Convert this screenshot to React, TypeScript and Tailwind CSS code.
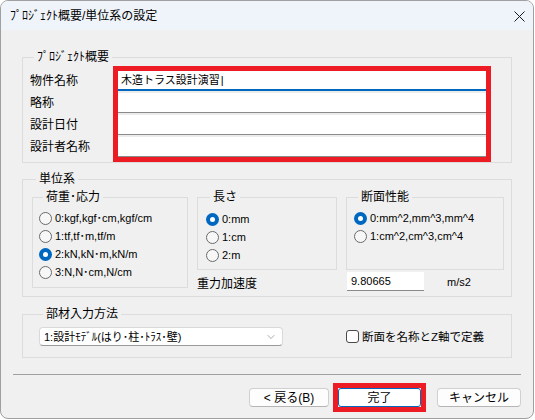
import { ChevronDown } from 'lucide-react';
import type { ReactNode } from 'react';

function Group({ title, className, children }: { title: string; className: string; children: ReactNode }) {
  return (
    <fieldset className={`border border-[#dcdcdc] ${className}`}>
      <legend className="ml-[4px] px-[3px] text-[12px] leading-[14px]">{title}</legend>
      {children}
    </fieldset>
  );
}

function Radio({ checked, label }: { checked?: boolean; label: string }) {
  return (
    <div className="flex h-[18px] items-center">
      {checked ? (
        <span className="flex h-[13px] w-[13px] shrink-0 items-center justify-center rounded-full bg-[#0067c0]">
          <span className="h-[5px] w-[5px] rounded-full bg-white" />
        </span>
      ) : (
        <span className="h-[13px] w-[13px] shrink-0 rounded-full border border-[#6a6a6a] bg-[#f7f7f7]" />
      )}
      <span className="ml-[3px] whitespace-nowrap text-[11px] leading-[14px]">{label}</span>
    </div>
  );
}

const fields = ['物件名称', '略称', '設計日付', '設計者名称'];

export default function App() {
  return (
    <div className="h-[420px] w-[535px] bg-white font-['Liberation_Sans','Noto_Sans_CJK_JP',sans-serif] text-black">
      <div className="flex h-[419px] w-[534px] flex-col overflow-hidden rounded-[8px] border border-[#a0a0a0] bg-[#f0f0f0]">
        {/* Title bar */}
        <div className="flex h-[29px] shrink-0 items-center justify-between bg-[#eff4fa] pl-[9px] pr-[8px]">
          <span className="text-[12px] leading-[14px]">ﾌﾟﾛｼﾞｪｸﾄ概要/単位系の設定</span>
          <svg width="11" height="11" viewBox="0 0 11 11" className="mt-[1px]">
            <path d="M0.5 0.5 L10.5 10.5 M10.5 0.5 L0.5 10.5" stroke="#1a1a1a" strokeWidth="1" fill="none" />
          </svg>
        </div>

        {/* Project overview */}
        <Group title="ﾌﾟﾛｼﾞｪｸﾄ概要" className="mx-[21px] mt-[20px] w-[490px] pl-[7px] pt-[2px]">
          <div className="flex">
            <div className="flex w-[83px] flex-col gap-[2px] pt-[5px]">
              {fields.map((f) => (
                <div key={f} className="flex h-[20px] items-center text-[12px]">
                  {f}
                </div>
              ))}
            </div>
            <div className="flex w-[378px] flex-col gap-[2px] border-[5px] border-[#ed1c24] bg-[#ececec]">
              <div className="flex h-[20px] items-center border-b-2 border-[#0067c0] bg-white pl-[3px] text-[11px]">
                木造トラス設計演習<span className="ml-[1px] font-light">|</span>
              </div>
              <div className="h-[20px] border-b border-[#8a8a8a] bg-white" />
              <div className="h-[20px] border-b border-[#8a8a8a] bg-white" />
              <div className="h-[20px] border-b border-[#8a8a8a] bg-white" />
            </div>
          </div>
        </Group>

        {/* Unit system */}
        <Group title="単位系" className="mx-[21px] mt-[9px] w-[490px] pb-[5px] pl-[9px] pt-[4px]">
          <div className="grid grid-cols-[156px_140px_158px] grid-rows-[80px_21px] gap-x-[9px]">
            <Group title="荷重･応力" className="row-span-2 h-[98px] pl-[6px] pt-[5px]">
              <Radio label="0:kgf,kgf･cm,kgf/cm" />
              <Radio label="1:tf,tf･m,tf/m" />
              <Radio checked label="2:kN,kN･m,kN/m" />
              <Radio label="3:N,N･cm,N/cm" />
            </Group>
            <Group title="長さ" className="h-[80px] pl-[8px] pt-[6px]">
              <Radio checked label="0:mm" />
              <Radio label="1:cm" />
              <Radio label="2:m" />
            </Group>
            <Group title="断面性能" className="h-[80px] pl-[7px] pt-[5px]">
              <Radio checked label="0:mm^2,mm^3,mm^4" />
              <Radio label="1:cm^2,cm^3,cm^4" />
            </Group>
            <div className="flex items-center pt-[6px] text-[12px] leading-[14px]">重力加速度</div>
            <div className="flex items-end">
              <div className="ml-[1px] flex h-[19px] w-[77px] items-center border-b border-[#8a8a8a] bg-white pl-[4px] text-[11px]">
                9.80665
              </div>
              <span className="mb-[2px] ml-[23px] text-[11px] leading-[14px]">m/s2</span>
            </div>
          </div>
        </Group>

        {/* Member input method */}
        <Group title="部材入力方法" className="mx-[21px] mt-[10px] w-[490px] pb-[11px] pl-[16px] pt-[6px]">
          <div className="flex items-center">
            <div className="flex h-[19px] w-[244px] items-center justify-between rounded-[4px] border border-[#d9d9d9] border-b-[#9a9a9a] bg-white pl-[4px] pr-[5px]">
              <span className="whitespace-nowrap text-[11px] leading-[14px]">1:設計ﾓﾃﾞﾙ(はり･柱･ﾄﾗｽ･壁)</span>
              <ChevronDown size={12} strokeWidth={1} color="#555" />
            </div>
            <span className="ml-[63px] h-[13px] w-[13px] rounded-[3px] border border-[#4a4a4a] bg-white" />
            <span className="ml-[3px] text-[11.5px] leading-[14px]">断面を名称とZ軸で定義</span>
          </div>
        </Group>

        <div className="mx-[12px] mt-[16px] h-px bg-[#a0a0a0]" />

        {/* Buttons */}
        <div className="mr-[12px] mt-[8px] flex items-center justify-end">
          <button className="h-[19px] w-[80px] rounded-[4px] border border-[#d0d0d0] border-b-[#b5b5b5] bg-[#fdfdfd] text-[12px] leading-none">
            &lt; 戻る(B)
          </button>
          <div className="ml-[4px] border-[5px] border-[#ed1c24]">
            <button className="block h-[19px] w-[83px] rounded-[3px] border border-[#0067c0] bg-white text-[12px] leading-none">
              完了
            </button>
          </div>
          <button className="ml-[11px] h-[19px] w-[84px] rounded-[4px] border border-[#d0d0d0] border-b-[#b5b5b5] bg-[#fdfdfd] text-[12px] leading-none">
            キャンセル
          </button>
        </div>
      </div>
    </div>
  );
}
